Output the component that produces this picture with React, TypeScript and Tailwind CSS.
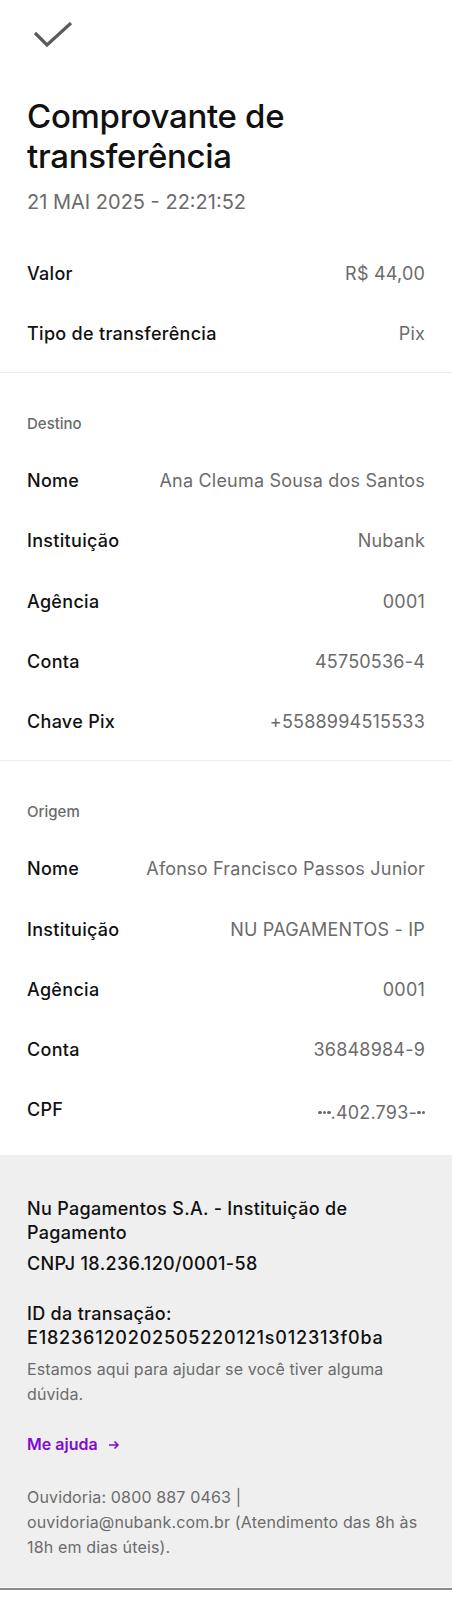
import React from 'react';

type Row = { label: string; value: React.ReactNode };

const Dots: React.FC<{ n: number }> = ({ n }) => (
  <span className="inline-flex items-center gap-[1px] align-middle">
    {Array.from({ length: n }).map((_, i) => (
      <span key={i} className="inline-block h-[3.5px] w-[3.5px] rounded-full bg-[#6b6b6b]" />
    ))}
  </span>
);

const topRows: Row[] = [
  { label: 'Valor', value: 'R$ 44,00' },
  { label: 'Tipo de transferência', value: 'Pix' },
];

const destino: Row[] = [
  { label: 'Nome', value: 'Ana Cleuma Sousa dos Santos' },
  { label: 'Instituição', value: 'Nubank' },
  { label: 'Agência', value: '0001' },
  { label: 'Conta', value: '45750536-4' },
  { label: 'Chave Pix', value: '+5588994515533' },
];

const origem: Row[] = [
  { label: 'Nome', value: 'Afonso Francisco Passos Junior' },
  { label: 'Instituição', value: 'NU PAGAMENTOS - IP' },
  { label: 'Agência', value: '0001' },
  { label: 'Conta', value: '36848984-9' },
  {
    label: 'CPF',
    value: (
      <span className="inline-flex items-center">
        <Dots n={3} />
        <span>.402.793-</span>
        <Dots n={2} />
      </span>
    ),
  },
];

const InfoRow: React.FC<Row> = ({ label, value }) => (
  <div className="flex h-[60.25px] items-center justify-between gap-4">
    <span className="text-[18px] font-medium tracking-[0.3px] text-[#111111]">{label}</span>
    <span className="text-right text-[18px] tracking-[0.2px] text-[#6b6b6b]">{value}</span>
  </div>
);

const App: React.FC = () => {
  return (
    <div className="w-[452px] bg-white font-['Inter',sans-serif] antialiased">
      {/* header */}
      <div className="px-[27px] pt-[22px]">
        <svg width="40" height="28" viewBox="0 0 40 28" className="ml-[7px] block">
          <polyline points="1,11 13,23 37,1" fill="none" stroke="#5a5a5a" strokeWidth="3.2" />
        </svg>
        <h1 className="mt-[46px] text-[33px] font-medium leading-[40px] tracking-[-0.3px] text-[#111111]">
          Comprovante de transferência
        </h1>
        <p className="mt-3 text-[20px] leading-[28px] text-[#6b6b6b]">21 MAI 2025 - 22:21:52</p>
      </div>

      <div className="px-[27px] pt-[27px] pb-2">
        {topRows.map((r) => (
          <InfoRow key={r.label} {...r} />
        ))}
      </div>
      <div className="h-px bg-[#ececec]" />

      <div className="px-[27px] pt-[41px] pb-2">
        <p className="mb-[17px] text-[15px] font-medium leading-5 text-[#6b6b6b]">Destino</p>
        {destino.map((r) => (
          <InfoRow key={r.label} {...r} />
        ))}
      </div>
      <div className="h-px bg-[#ececec]" />

      <div className="px-[27px] pt-[41px] pb-[15px]">
        <p className="mb-[17px] text-[15px] font-medium leading-5 text-[#6b6b6b]">Origem</p>
        {origem.map((r) => (
          <InfoRow key={r.label} {...r} />
        ))}
      </div>

      {/* footer */}
      <div className="bg-[#efefef]">
        <div className="px-[27px] pt-[42px] pb-[27px]">
          <p className="text-[18px] font-medium leading-6 tracking-[0.3px] text-[#111111]">
            Nu Pagamentos S.A. - Instituição de Pagamento
          </p>
          <p className="mt-[7px] text-[18px] font-medium leading-6 tracking-[0.35px] text-[#111111]">
            CNPJ 18.236.120/0001-58
          </p>

          <p className="mt-[26px] text-[18px] font-medium leading-6 tracking-[0.3px] text-[#111111]">
            ID da transação:
            <br />
            <span className="tracking-[0.8px]">E18236120202505220121s012313f0ba</span>
          </p>
          <p className="mt-[7px] text-[16px] leading-[25px] tracking-[0.1px] text-[#6b6b6b]">
            Estamos aqui para ajudar se você tiver alguma dúvida.
          </p>

          <div className="mt-[25px] flex items-center gap-[10px] text-[16px] font-semibold leading-[25px] text-[#820ad1]">
            <span>Me ajuda</span>
            <svg width="12" height="12" viewBox="0 0 12 12" fill="none" stroke="#820ad1" strokeWidth="1.6">
              <path d="M1 6h9M6.5 2.5 10 6l-3.5 3.5" />
            </svg>
          </div>

          <p className="mt-[28px] text-[16px] leading-[25px] tracking-[0.15px] text-[#6b6b6b]">
            Ouvidoria: 0800 887 0463 | ouvidoria@nubank.com.br (Atendimento das 8h às 18h em dias úteis).
          </p>
        </div>
        <div className="h-px bg-[#f8f8f8]" />
        <div className="h-[2px] bg-[#8c8c8c]" />
      </div>
    </div>
  );
};

export default App;
